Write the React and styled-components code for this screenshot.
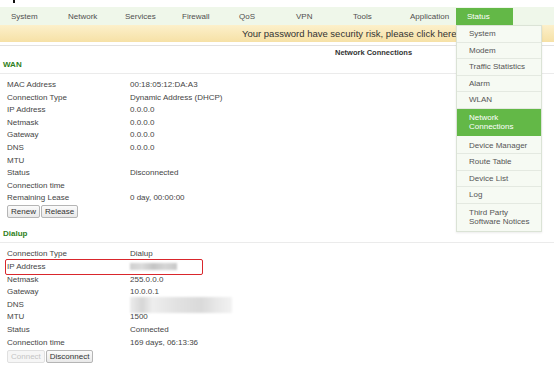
import React from 'react'
import styled, { createGlobalStyle } from 'styled-components'

const navItems = ['System', 'Network', 'Services', 'Firewall', 'QoS', 'VPN', 'Tools', 'Application', 'Status'];

const menuItems = [
    { label: 'System' },
    { label: 'Modem' },
    { label: 'Traffic Statistics' },
    { label: 'Alarm' },
    { label: 'WLAN' },
    { label: ['Network', 'Connections'], active: true },
    { label: 'Device Manager' },
    { label: 'Route Table' },
    { label: 'Device List' },
    { label: 'Log' },
    { label: ['Third Party', 'Software Notices'] },
];

const wanRows = [
    ['MAC Address', '00:18:05:12:DA:A3'],
    ['Connection Type', 'Dynamic Address (DHCP)'],
    ['IP Address', '0.0.0.0'],
    ['Netmask', '0.0.0.0'],
    ['Gateway', '0.0.0.0'],
    ['DNS', '0.0.0.0'],
    ['MTU', ''],
    ['Status', 'Disconnected'],
    ['Connection time', ''],
    ['Remaining Lease', '0 day, 00:00:00'],
];

const dialupRows = [
    ['Connection Type', 'Dialup'],
    ['IP Address', 'blur-ip', true],
    ['Netmask', '255.0.0.0'],
    ['Gateway', '10.0.0.1'],
    ['DNS', 'blur-dns'],
    ['MTU', '1500'],
    ['Status', 'Connected'],
    ['Connection time', '169 days, 06:13:36'],
];

const GlobalStyle = createGlobalStyle`
    html, body {
        margin: 0;
        padding: 0;
        background: #fff;
    }
    body {
        font-family: "Liberation Sans", Arial, sans-serif;
        font-size: 8px;
        color: #444;
        width: 554px;
        height: 371px;
        overflow: hidden;
    }
`;

const Page = styled.div`
    display: flex;
    flex-direction: column;
    width: 554px;
`;

const TopStrip = styled.div`
    height: 7px;
    padding-left: 13px;
`;

const Mark = styled.div`
    width: 2px;
    height: 3px;
    background: #111;
`;

const NavBar = styled.div`
    display: flex;
    height: 18px;
    background: #eff7ea;
`;

const NavItem = styled.div`
    position: relative;
    width: 57px;
    box-sizing: border-box;
    padding-left: 11px;
    margin-top: 1px;
    height: 17px;
    line-height: 17px;
    color: ${p => (p.$active ? '#fff' : '#4f4f4f')};
    background: ${p => (p.$active ? '#63b847' : 'transparent')};
`;

const Dropdown = styled.div`
    position: absolute;
    top: 17px;
    left: 0;
    width: 86px;
    box-sizing: border-box;
    background: #f6faf3;
    border: 1px solid #dbe3d6;
    box-shadow: 0 1px 2px rgba(0, 0, 0, 0.08);
    z-index: 10;
    padding-bottom: 1px;
`;

const MenuItem = styled.div`
    padding: ${p => (p.$tall ? '4px 12px 3px' : '4px 12px')};
    line-height: ${p => (p.$tall ? '9.3px' : '7.6px')};
    color: ${p => (p.$active ? '#fff' : '#555')};
    background: ${p => (p.$active ? '#63b847' : 'transparent')};
    border-bottom: 1px solid ${p => (p.$active ? '#63b847' : '#e4e9e1')};
    margin-bottom: ${p => (p.$active ? '2px' : '0')};
    white-space: nowrap;
    &:last-child {
        border-bottom: none;
    }
`;

const Banner = styled.div`
    height: 17px;
    line-height: 17px;
    padding-left: 242px;
    font-size: 9.5px;
    color: #333;
    background: linear-gradient(#fcf0cb, #f6e1a6);
    white-space: nowrap;
    overflow: hidden;
`;

const Divider = styled.div`
    margin-top: 3px;
    height: 1px;
    background: #e2e2e2;
`;

const PageTitle = styled.div`
    padding-left: 335px;
    line-height: 13px;
    font-size: 7.5px;
    font-weight: bold;
    color: #333;
`;

const Section = styled.div`
    margin-top: ${p => p.$gap || 0}px;
`;

const SectionTitle = styled.div`
    padding-left: 3px;
    line-height: 12px;
    padding-bottom: 2px;
    font-weight: bold;
    color: #2f7f21;
    border-bottom: 1px solid #ebebeb;
`;

const Table = styled.div`
    margin-top: 5px;
    padding-left: 7px;
    display: flex;
    flex-direction: column;
`;

const Row = styled.div`
    position: relative;
    display: grid;
    grid-template-columns: 123px auto;
    height: 12.6px;
    line-height: 12.6px;
    color: #454545;
    ${p => p.$marked && `
        &::after {
            content: '';
            position: absolute;
            left: -2px;
            width: 198px;
            top: -1.8px;
            bottom: -1px;
            border: 1.5px solid #d9262c;
            border-radius: 2px;
            box-sizing: border-box;
        }
    `}
`;

const Blur = styled.span`
    display: inline-block;
    vertical-align: middle;
    width: ${p => p.$w}px;
    height: ${p => p.$h}px;
    margin: ${p => p.$m || 0}px 0;
    background: ${p => p.$bg};
    filter: blur(1px);
`;

const ButtonGroup = styled.div`
    display: flex;
    gap: 1px;
    padding-left: 7px;
    margin-top: 0.5px;
`;

const Button = styled.button`
    height: 13px;
    padding: 0 3px;
    font-family: inherit;
    font-size: 8px;
    line-height: 11px;
    color: ${p => (p.disabled ? '#c4c4c4' : '#333')};
    background: ${p => (p.disabled ? '#f6f6f6' : 'linear-gradient(#fbfbfb, #e9e9e9)')};
    border: 1px solid ${p => (p.disabled ? '#e0e0e0' : '#b5b5b5')};
    border-radius: 2px;
`;

const renderValue = value => {
    if (value === 'blur-ip') {
        return <Blur $w={47} $h={7} $bg="linear-gradient(90deg, #cfcfcf, #dcdcdc 25%, #c4c4c4 50%, #d6d6d6 75%, #c8c8c8)" />;
    }
    if (value === 'blur-dns') {
        return <Blur $w={102} $h={16} $m={-2} $bg="linear-gradient(90deg, #ececec, #d6d6d6 12%, #eeeeee 22%, #e2e2e2 45%, #dadada 70%, #e8e8e8 85%, #f2f2f2)" />;
    }
    return value;
};

const DataTable = ({ rows }) => (
    <Table>
        {rows.map(([label, value, marked]) => (
            <Row key={label} $marked={marked}>
                <span>{label}</span>
                <span>{renderValue(value)}</span>
            </Row>
        ))}
    </Table>
);

const App = () => {
    return (
        <Page>
            <GlobalStyle />
            <TopStrip>
                <Mark />
            </TopStrip>
            <NavBar>
                {navItems.map(item => (
                    <NavItem key={item} $active={item === 'Status'}>
                        {item}
                        {item === 'Status' && (
                            <Dropdown>
                                {menuItems.map((m, i) => (
                                    <MenuItem key={i} $active={m.active} $tall={Array.isArray(m.label)}>
                                        {Array.isArray(m.label)
                                            ? m.label.map(l => <div key={l}>{l}</div>)
                                            : m.label}
                                    </MenuItem>
                                ))}
                            </Dropdown>
                        )}
                    </NavItem>
                ))}
            </NavBar>
            <Banner>Your password have security risk, please click here!</Banner>
            <Divider />
            <PageTitle>Network Connections</PageTitle>

            <Section>
                <SectionTitle>WAN</SectionTitle>
                <DataTable rows={wanRows} />
                <ButtonGroup>
                    <Button>Renew</Button>
                    <Button>Release</Button>
                </ButtonGroup>
            </Section>

            <Section $gap={10}>
                <SectionTitle>Dialup</SectionTitle>
                <DataTable rows={dialupRows} />
                <ButtonGroup>
                    <Button disabled>Connect</Button>
                    <Button>Disconnect</Button>
                </ButtonGroup>
            </Section>
        </Page>
    )
}

export default App;
